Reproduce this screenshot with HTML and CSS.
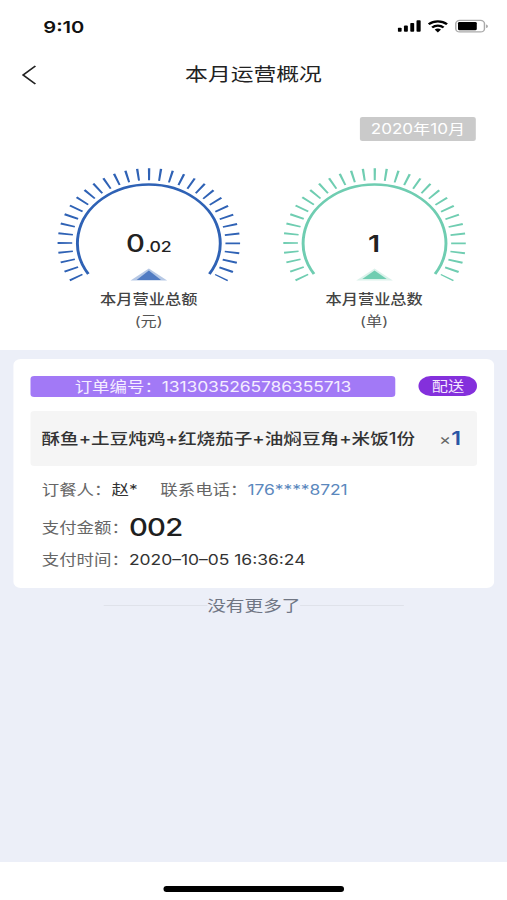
FILE: index.html
```html
<!DOCTYPE html>
<html lang="zh-CN">
<head>
<meta charset="utf-8">
<title>本月运营概况</title>
<link rel="stylesheet" href="styles.css">
</head>
<body>
<div class="screen">
  <header class="status">
    <span class="time">9:10</span>
    <svg class="status-icons" width="75" height="14" viewBox="0 0 75 14">
      <rect x="0" y="8.8" width="3.2" height="4" rx=".8"/>
      <rect x="5.1" y="6.6" width="3.2" height="6.2" rx=".8"/>
      <rect x="10.3" y="4" width="3.2" height="8.8" rx=".8"/>
      <rect x="15.4" y="1.3" width="3.4" height="11.5" rx=".8"/>
      <g fill="none" stroke="#000" stroke-width="2.1">
        <path d="M25.4 5.3a11 11 0 0 1 15 0"/>
        <path d="M28.2 8.5a6.9 6.9 0 0 1 9.400 0"/>
      </g>
      <path d="M30.300 10.600a4 4 0 0 1 5.200 0L32.900 13.400z"/>
      <rect x="47.600" y="1.400" width="23.500" height="11.500" rx="3.200" fill="#fff" stroke="#aaa" stroke-width="1.200"/>
      <rect x="49.400" y="3" width="15.400" height="8.200" rx="1.200"/>
      <path d="M72.500 5.400c1.800 .3 1.800 3.200 0 3.600z" fill="#999"/>
    </svg>
  </header>
  <nav class="nav">
    <svg class="back" width="12" height="20" viewBox="0 0 12 20"><path d="M11 1L1 10l10 9" fill="none" stroke="#222" stroke-width="1.600"/></svg>
    <h1>本月运营概况</h1>
  </nav>
  <div class="month-row"><span class="month">2020年10月</span></div>
  <section class="gauges">
    <div class="gauge blue">
      <div class="dial">
        <svg width="156" height="120" viewBox="-78 -76 156 120">
          <path class="ticks" d="M-59.180 35.090A68.800 68.800 0 1 1 59.180 35.090"/>
          <path class="arc" d="M-49.600 31A58.500 58.500 0 1 1 49.600 31"/>
          <path class="halo" d="M-15 37.500L0 25.500 15 37.500z"/>
          <path class="tip" d="M-10 37L0 27.500 10 37z"/>
        </svg>
        <p class="value">0<small>.02</small></p>
      </div>
      <p class="name">本月营业总额</p>
      <p class="unit">(元)</p>
    </div>
    <div class="gauge green">
      <div class="dial">
        <svg width="156" height="120" viewBox="-78 -76 156 120">
          <path class="ticks" d="M-59.180 35.090A68.800 68.800 0 1 1 59.180 35.090"/>
          <path class="arc" d="M-49.600 31A58.500 58.500 0 1 1 49.600 31"/>
          <path class="halo" d="M-15 37.500L0 25.500 15 37.500z"/>
          <path class="tip" d="M-10 36L0 27.500 10 36z"/>
        </svg>
        <p class="value one">1</p>
      </div>
      <p class="name">本月营业总数</p>
      <p class="unit">(单)</p>
    </div>
  </section>
  <main class="list">
    <article class="card">
      <div class="card-head">
        <span class="order-no">订单编号：<span class="digits">1313035265786355713</span></span>
        <span class="badge">配送</span>
      </div>
      <div class="dish">
        <span class="dish-name">酥鱼+土豆炖鸡+红烧茄子+油焖豆角+米饭1份</span>
        <span class="qty">×<b>1</b></span>
      </div>
      <div class="row person"><span class="label">订餐人：</span><span class="who">赵*</span><span class="label">联系电话：</span><span class="phone">176****8721</span></div>
      <div class="row amount"><span class="label">支付金额：</span><span class="sum">002</span></div>
      <div class="row paid"><span class="label">支付时间：</span><span class="date">2020–10–05 16:36:24</span></div>
    </article>
    <div class="end"><span>没有更多了</span></div>
  </main>
  <footer class="home"><i></i></footer>
</div>
</body>
</html>
```
FILE: styles.css
```css
* { box-sizing: border-box; }
body { margin: 0; overflow: hidden; background: #fff; }
p, h1 { margin: 0; font-weight: 400; }

/* Wide-set screen: everything is laid out at 415.6px and stretched to 507px. */
.screen {
  width: 415.574px;
  height: 900px;
  transform: scaleX(1.22);
  transform-origin: 0 0;
  display: flex;
  flex-direction: column;
  font-family: Inter, "Noto Sans CJK SC", sans-serif;
  font-size: 14.3px;
  color: #333;
  white-space: nowrap;
}

.status {
  height: 50px;
  padding: 3px 15px 0 35.500px;
  display: flex;
  align-items: center;
  justify-content: space-between;
}
.time { font-size: 16.5px; font-weight: 600; color: #111; line-height: 46px; }
.status-icons { margin-top: -1px; }

.nav { height: 50px; display: flex; align-items: center; padding: 0 18px; }
.back { flex: none; margin-top: -1px; }
.nav h1 { flex: 1; text-align: center; font-size: 18.7px; line-height: 48px; color: #222; margin: -1px 12px 0 0; }

.month-row { padding: 17px 25.300px 0 0; height: 67px; display: flex; justify-content: flex-end; }
.month {
  width: 95.500px;
  height: 23.500px;
  line-height: 24px;
  border-radius: 2px;
  background: #cacaca;
  color: #fff;
  text-align: center;
  font-size: 14px;
}

.gauges { height: 183px; display: flex; padding: 0 16.500px 0 29.500px; justify-content: space-between; }
.gauge { width: 185px; text-align: center; }
.dial { display: grid; justify-items: center; height: 120px; }
.dial > * { grid-area: 1 / 1; }
.blue { color: #2f62b5; }
.green { color: #6fcdb1; }
.dial path { fill: none; stroke: currentColor; }
.dial .ticks { stroke-width: 12; stroke-dasharray: 1.800 7.206; stroke-dashoffset: .1; }
.dial .arc { stroke-width: 2.400; }
.dial .halo { fill: currentColor; stroke: none; opacity: .35; }
.dial .tip { fill: currentColor; stroke: none; opacity: .75; }
.green .halo { opacity: .25; }
.green .tip { opacity: 1; }
.value { font-size: 24px; line-height: 30px; font-weight: 500; color: #222; padding-top: 62px; }
.value small { font-size: 14.500px; letter-spacing: -.2px; }
.value.one { font-weight: 600; font-size: 23.500px; }
.name { font-size: 13.300px; line-height: 22px; color: #444; margin-top: 1px; font-weight: 500; }
.unit { font-size: 13.300px; line-height: 22px; color: #555; }

.list { height: 512px; background: #eceff8; padding: 8.500px 10.700px 0 11.300px; }
.card { height: 229px; background: #fff; border-radius: 6px; padding: 17.500px 14px 0 13.700px; }
.card-head { display: flex; justify-content: space-between; }
.order-no {
  width: 299px;
  height: 21px;
  line-height: 22px;
  border-radius: 3px;
  background: #a279f6;
  color: #f4edff;
  text-align: center;
}
.digits { letter-spacing: -.08px; }
.badge {
  width: 47.500px;
  height: 20px;
  line-height: 20px;
  border-radius: 10px;
  background: #8430dc;
  color: #f4e6ff;
  text-align: center;
  font-size: 13.300px;
}
.dish {
  height: 55.500px;
  margin-top: 13.500px;
  padding: 0 13px 0 9px;
  border-radius: 3px;
  background: #f5f5f5;
  display: flex;
  align-items: center;
  justify-content: space-between;
}
.dish-name { font-size: 15.250px; font-weight: 500; color: #333; margin-top: -2px; }
.qty { color: #666; font-size: 15px; margin-top: 1px; }
.qty b { color: #2a55a5; font-size: 19px; font-weight: 600; }
.row { display: flex; align-items: center; padding-left: 9.200px; color: #333; }
.label { color: #666; margin-top: -2px; }
.person { height: 46.500px; }
.who { width: 40px; margin-top: -2px; }
.phone { color: #5b88bd; letter-spacing: -.05px; }
.amount { height: 30px; }
.sum { font-size: 24px; font-weight: 500; color: #1f1f1f; letter-spacing: -.6px; }
.paid { height: 34px; }

.end { height: 35px; display: flex; align-items: center; justify-content: center; font-size: 15.300px; color: #707684; }
.end span { margin-top: -3px; }
.end::before, .end::after { content: ""; width: 84.500px; height: 1px; background: #dfe2ea; }

.home { height: 38px; display: flex; justify-content: center; padding-top: 23.500px; }
.home i { width: 148px; height: 6px; border-radius: 2.500px / 3px; background: #000; }
```
